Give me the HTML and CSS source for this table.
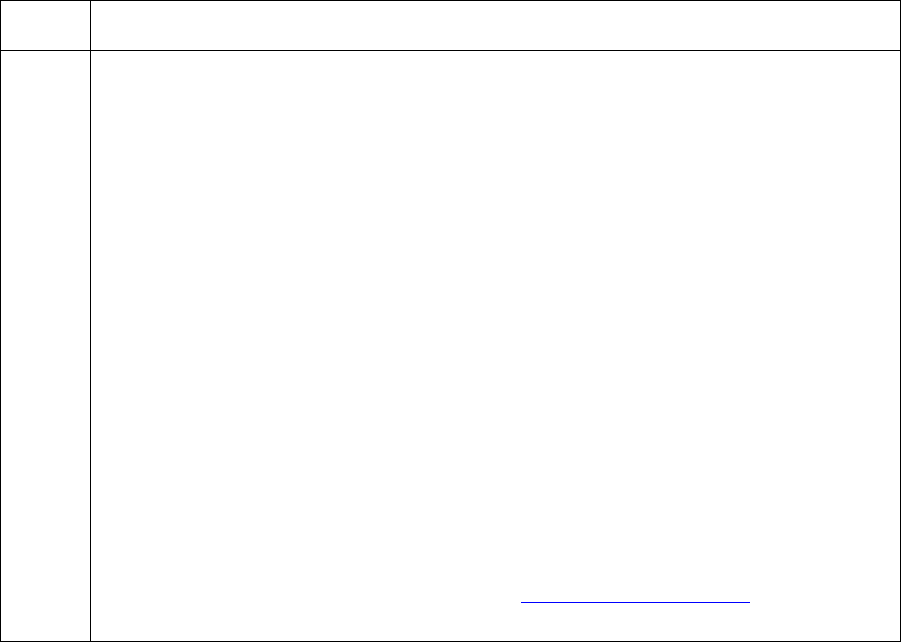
FILE: index.html
```html
<!DOCTYPE html>
<html lang="en">
<head>
<meta charset="UTF-8" />
<meta name="viewport" content="width=device-width, initial-scale=1" />
<title>Page</title>
<link rel="stylesheet" href="styles.css">
</head>
<body>

<div class="frame">
  <div class="cell side head"></div>
  <div class="cell main head"></div>
  <div class="cell side"></div>
  <div class="cell main body">
    <a class="blank-link" href="#" aria-label="link"></a>
  </div>
</div>

</body>
</html>
```

FILE: styles.css
```css
html, body {
  margin: 0;
  padding: 0;
  background: #fff;
  font-family: "Liberation Serif", serif;
}
.frame {
  width: 901px;
  height: 642px;
  box-sizing: border-box;
  border: 1px solid #000;
  display: grid;
  grid-template-columns: 90px 1fr;
  grid-template-rows: 50px 1fr;
  overflow: hidden;
}
.cell {
  box-sizing: border-box;
}
.side {
  border-right: 1px solid #000;
}
.head {
  border-bottom: 1px solid #000;
}
.body {
  display: flex;
  align-items: flex-end;
  padding: 0 0 38px 430px;
}
.blank-link {
  display: inline-block;
  width: 229px;
  height: 1px;
  border-bottom: 1px solid #0000ff;
  text-decoration: none;
}
```
